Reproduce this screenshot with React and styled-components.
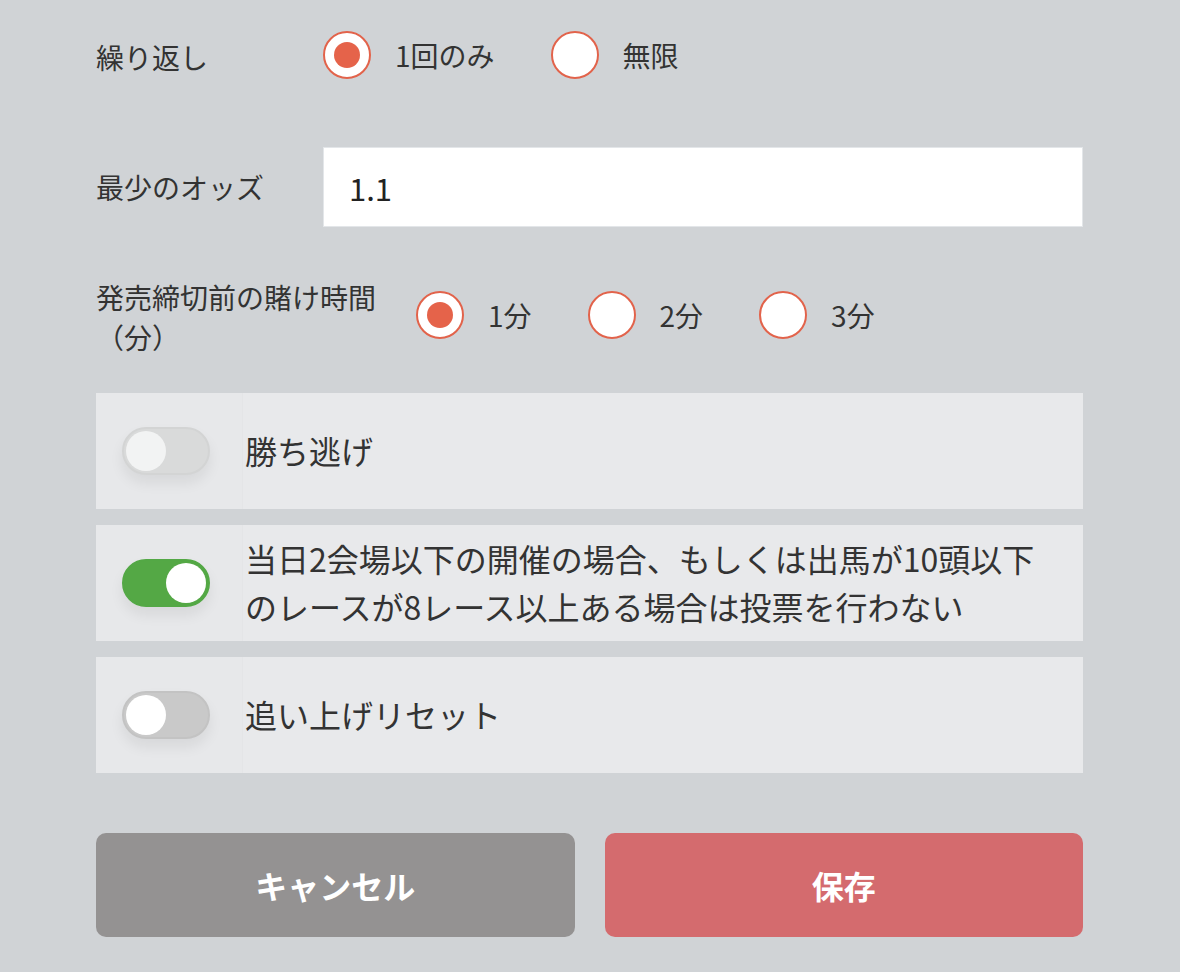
import React, { useState } from 'react'
import styled, { createGlobalStyle, css } from 'styled-components'

const GlobalStyle = createGlobalStyle`
  html, body {
    margin: 0;
    padding: 0;
    background: #d0d3d6;
  }
  body {
    font-family: "Noto Sans CJK JP", "Noto Sans", sans-serif;
    color: #333;
  }
`

const App = () => {
  const [repeat, setRepeat] = useState('once')
  const [minutes, setMinutes] = useState(1)
  const [odds, setOdds] = useState('1.1')
  const [toggles, setToggles] = useState({ escape: false, skip: true, reset: false })

  return (
    <>
      <GlobalStyle />
      <StyledForm>
        <FieldRow>
          <Label>繰り返し</Label>
          <RadioGroup>
            {renderRadio('repeat', repeat === 'once', () => setRepeat('once'), '1回のみ')}
            {renderRadio('repeat', repeat === 'forever', () => setRepeat('forever'), '無限')}
          </RadioGroup>
        </FieldRow>

        <FieldRow>
          <Label>最少のオッズ</Label>
          <OddsInput value={odds} onChange={e => setOdds(e.target.value)} />
        </FieldRow>

        <FieldRow>
          <Label $wide>発売締切前の賭け時間<br />（分）</Label>
          <RadioGroup>
            {[1, 2, 3].map(m => (
              <React.Fragment key={m}>
                {renderRadio('minutes', minutes === m, () => setMinutes(m), `${m}分`)}
              </React.Fragment>
            ))}
          </RadioGroup>
        </FieldRow>

        <ToggleList>
          {renderToggle('escape', '勝ち逃げ', true)}
          {renderToggle('skip', <>当日2会場以下の開催の場合、もしくは出馬が10頭以下<br />のレースが8レース以上ある場合は投票を行わない</>)}
          {renderToggle('reset', '追い上げリセット')}
        </ToggleList>

        <Actions>
          <ActionButton $variant='cancel'>キャンセル</ActionButton>
          <ActionButton $variant='save'>保存</ActionButton>
        </Actions>
      </StyledForm>
    </>
  )

  function renderRadio(name, checked, onChange, text) {
    return (
      <RadioOption>
        <HiddenInput type='radio' name={name} checked={checked} onChange={onChange} />
        <RadioCircle $checked={checked} />
        <span>{text}</span>
      </RadioOption>
    )
  }

  function renderToggle(key, text, muted) {
    const on = toggles[key]
    return (
      <ToggleRow>
        <ToggleCell>
          <Switch
            $on={on}
            $muted={muted}
            onClick={() => setToggles(t => ({ ...t, [key]: !t[key] }))}
          >
            <Knob $on={on} $muted={muted} />
          </Switch>
        </ToggleCell>
        <ToggleText>{text}</ToggleText>
      </ToggleRow>
    )
  }
}

const StyledForm = styled.div`
  box-sizing: border-box;
  width: 1180px;
  padding: 17px 97px 35px 96px;
`

const FieldRow = styled.div`
  display: flex;
  align-items: center;
  min-height: 80px;
  margin-bottom: 50px;
`

const Label = styled.div`
  flex: 0 0 auto;
  box-sizing: border-box;
  width: ${p => (p.$wide ? '320px' : '227px')};
  padding-right: ${p => (p.$wide ? '40px' : '0')};
  font-size: 28px;
  line-height: 40px;
  color: #333;
`

const RadioGroup = styled.div`
  display: flex;
  align-items: center;
  gap: 56px;
`

const RadioOption = styled.label`
  display: flex;
  align-items: center;
  gap: 24px;
  font-size: 28px;
  line-height: 40px;
  color: #333;
  cursor: pointer;

  span {
    position: relative;
    top: -2px;
  }
`

const HiddenInput = styled.input`
  display: none;
`

const RadioCircle = styled.span`
  box-sizing: border-box;
  width: 48px;
  height: 48px;
  border-radius: 50%;
  border: 2px solid #e2634b;
  background: #fff;
  display: flex;
  align-items: center;
  justify-content: center;

  &::after {
    content: '';
    width: 26px;
    height: 26px;
    border-radius: 50%;
    background: #e5634a;
    display: ${p => (p.$checked ? 'block' : 'none')};
  }
`

const OddsInput = styled.input`
  flex: 1;
  box-sizing: border-box;
  height: 80px;
  border: 1px solid #e3e6e9;
  background: #fff;
  padding: 0 25px;
  font-family: inherit;
  font-size: 31px;
  color: #222;
  outline: none;
`

const ToggleList = styled.div`
  display: flex;
  flex-direction: column;
  gap: 16px;
  margin-top: -14px;
`

const ToggleRow = styled.div`
  display: flex;
  align-items: stretch;
  height: 116px;
  background: #e8e9eb;
`

const ToggleCell = styled.div`
  flex: 0 0 147px;
  display: flex;
  align-items: center;
  padding-left: 26px;
  box-sizing: border-box;
  background: #e7e8ea;
  border-right: 1px solid #e4e5e7;
`

const Switch = styled.button`
  position: relative;
  box-sizing: border-box;
  width: 88px;
  height: 48px;
  padding: 0;
  border-radius: 24px;
  border: 2px solid ${p => (p.$on ? '#53a845' : p.$muted ? '#d3d4d4' : '#c3c3c3')};
  background: ${p => (p.$on ? '#54a845' : p.$muted ? '#d9dada' : '#c9c9c9')};
  box-shadow: 0 8px 14px rgba(0, 0, 0, 0.07);
  cursor: pointer;
`

const Knob = styled.span`
  position: absolute;
  top: 2px;
  width: 40px;
  height: 40px;
  border-radius: 50%;
  background: ${p => (p.$muted && !p.$on ? '#f2f3f3' : '#fff')};
  ${p => (p.$on ? css`right: 2px;` : css`left: 2px;`)}
`

const ToggleText = styled.div`
  display: flex;
  align-items: center;
  padding-left: 2px;
  padding-bottom: 3px;
  font-size: 32px;
  line-height: 48px;
  color: #333;
`

const Actions = styled.div`
  display: grid;
  grid-template-columns: 1fr 1fr;
  gap: 30px;
  margin-top: 60px;
`

const ActionButton = styled.button`
  height: 104px;
  border: none;
  border-radius: 10px;
  font-family: inherit;
  font-size: 32px;
  font-weight: 700;
  color: #fff;
  cursor: pointer;
  background: ${p => (p.$variant === 'save' ? '#d46b6e' : '#949292')};
`

export default App
